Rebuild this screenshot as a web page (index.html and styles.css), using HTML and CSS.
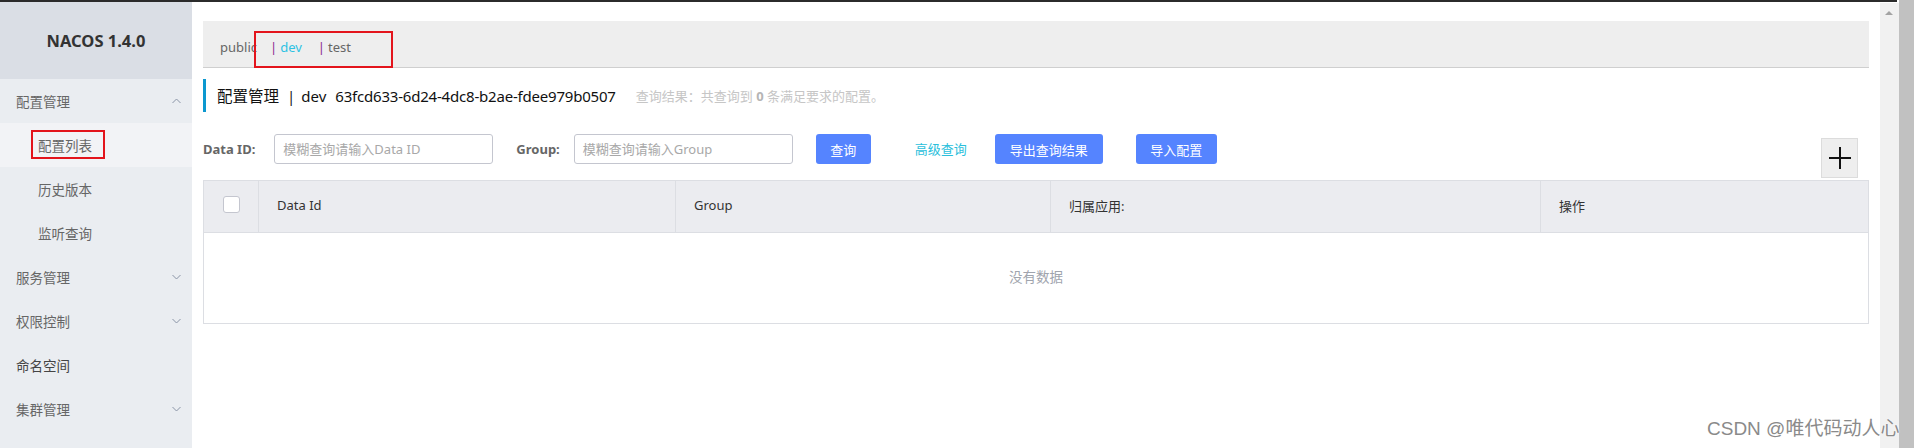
FILE: index.html
```html
<!DOCTYPE html>
<html lang="zh-CN">
<head>
<meta charset="utf-8">
<title>Nacos</title>
<link rel="stylesheet" href="styles.css">
</head>
<body>
<div class="screen">
  <div class="frame">
    <div class="topbar"></div>
    <div class="layout">
      <aside class="sidebar">
        <div class="brand">NACOS 1.4.0</div>
        <ul class="menu">
          <li class="menu-item"><span>配置管理</span><svg class="chev" width="9" height="6" viewBox="0 0 9 6"><path d="M0.5 5 L4.5 1 L8.5 5" fill="none" stroke="#8a94a6" stroke-width="1"/></svg></li>
          <li class="sub-item active"><span>配置列表</span><span class="annot annot-menu"></span></li>
          <li class="sub-item"><span>历史版本</span></li>
          <li class="sub-item"><span>监听查询</span></li>
          <li class="menu-item"><span>服务管理</span><svg class="chev" width="9" height="6" viewBox="0 0 9 6"><path d="M0.5 1 L4.5 5 L8.5 1" fill="none" stroke="#8a94a6" stroke-width="1"/></svg></li>
          <li class="menu-item"><span>权限控制</span><svg class="chev" width="9" height="6" viewBox="0 0 9 6"><path d="M0.5 1 L4.5 5 L8.5 1" fill="none" stroke="#8a94a6" stroke-width="1"/></svg></li>
          <li class="menu-item dark"><span>命名空间</span></li>
          <li class="menu-item"><span>集群管理</span><svg class="chev" width="9" height="6" viewBox="0 0 9 6"><path d="M0.5 1 L4.5 5 L8.5 1" fill="none" stroke="#8a94a6" stroke-width="1"/></svg></li>
        </ul>
      </aside>
      <main class="main">
        <div class="ns-bar">
          <span class="ns ns-public">public</span>
          <span class="ns-sep">|</span><span class="ns ns-active">dev</span>
          <span class="ns-sep ns-sep2">|</span><span class="ns">test</span>
          <span class="annot annot-ns"></span>
        </div>
        <div class="title-row">
          <span class="title-cn">配置管理</span>
          <span class="title-sep">|</span>
          <span class="title-ns">dev</span>
          <span class="title-id">63fcd633-6d24-4dc8-b2ae-fdee979b0507</span>
          <span class="result">查询结果：共查询到 <b>0</b> 条满足要求的配置。</span>
        </div>
        <div class="search-row">
          <label class="label label-id">Data ID:</label>
          <div class="input input-id">模糊查询请输入Data ID</div>
          <label class="label label-group">Group:</label>
          <div class="input input-group">模糊查询请输入Group</div>
          <button class="btn btn-query">查询</button>
          <span class="link">高级查询</span>
          <button class="btn btn-export">导出查询结果</button>
          <button class="btn btn-import">导入配置</button>
          <div class="add-btn"><svg width="24" height="24" viewBox="0 0 24 24"><path d="M12 1 V23 M1 12 H23" stroke="#111" stroke-width="2"/></svg></div>
        </div>
        <div class="table">
          <div class="thead">
            <div class="cell cell-check"><span class="checkbox"></span></div>
            <div class="cell">Data Id</div>
            <div class="cell">Group</div>
            <div class="cell">归属应用:</div>
            <div class="cell cell-last">操作</div>
          </div>
          <div class="tbody">没有数据</div>
        </div>
      </main>
      <div class="vscroll"><span class="arrow"></span></div>
    </div>
  </div>
  <div class="outer-scroll"></div>
  <div class="watermark">CSDN @唯代码动人心</div>
</div>
</body>
</html>
```

FILE: styles.css
```css
* { box-sizing: border-box; }
html, body { margin: 0; padding: 0; }
body {
  font-family: "Noto Sans", "Noto Sans CJK SC", sans-serif;
  font-size: 13px;
  color: #333;
  background: #fff;
}
.screen {
  position: relative;
  width: 1914px;
  height: 448px;
  display: flex;
  overflow: hidden;
}
.frame {
  width: 1899px;
  height: 448px;
  display: flex;
  flex-direction: column;
}
.topbar {
  height: 2px;
  width: 1897px;
  background: #2b2b2b;
  flex: none;
}
.layout {
  flex: 1;
  display: flex;
  min-height: 0;
}
.sidebar {
  width: 192px;
  flex: none;
  background: #eaedf1;
}
.brand {
  height: 77px;
  background: #dadee5;
  display: flex;
  align-items: center;
  justify-content: center;
  font-weight: bold;
  font-size: 16.5px;
  color: #333;
  padding-bottom: 1px;
}
.menu { list-style: none; margin: 0; padding: 0; }
.menu-item, .sub-item {
  position: relative;
  height: 44px;
  display: flex;
  align-items: center;
  font-size: 13.5px;
  color: #666;
}
.menu-item { padding: 0 11px 0 16px; justify-content: space-between; }
.menu-item.dark { color: #444; }
.sub-item { padding-left: 38px; }
.sub-item.active { background: #f2f3f6; }
.chev { display: block; }
.annot {
  position: absolute;
  border: 2px solid #e3141c;
  pointer-events: none;
}
.annot-menu { left: 31px; top: 7px; width: 74px; height: 29px; }

.main {
  flex: 1;
  min-width: 0;
  padding: 19px 11px 0 11px;
}
.ns-bar {
  position: relative;
  height: 47px;
  background: #eeeeee;
  border-bottom: 1px solid #cfcfcf;
  display: flex;
  align-items: center;
  padding-left: 17px;
  padding-top: 5px;
  font-size: 13px;
  color: #666;
}
.ns-public { margin-right: 13px; }
.ns-sep { color: #8b2a8e; margin-right: 3px; }
.ns-sep2 { margin-left: 16px; }
.ns-active { color: #2ec2e3; }
.annot-ns { left: 51px; top: 10px; width: 139px; height: 37px; }

.title-row {
  margin-top: 11px;
  height: 33px;
  border-left: 3px solid #0c98cf;
  padding-left: 11px;
  display: flex;
  align-items: center;
  font-size: 15px;
  color: #111;
  white-space: nowrap;
}
.title-cn { font-size: 15.5px; }
.title-sep { margin: 0 6px 0 8px; color: #222; }
.title-ns { margin-right: 9px; }
.title-id { letter-spacing: -0.2px; }
.result {
  margin-left: 20px;
  font-size: 13px;
  color: #c6c6c6;
}
.result b { color: #b5b5b5; }

.search-row {
  margin-top: 22px;
  height: 44px;
  display: flex;
  align-items: flex-start;
}
.label {
  height: 30px;
  line-height: 30px;
  font-weight: bold;
  font-size: 13px;
  color: #666;
  margin-right: 14px;
}
.label-id { margin-right: 19px; }
.label-group { margin-left: 23px; }
.input {
  height: 30px;
  border: 1px solid #c4c6cf;
  border-radius: 3px;
  padding-left: 8px;
  line-height: 28px;
  font-size: 13px;
  color: #a8a8a8;
}
.input-id { width: 219px; }
.input-group { width: 219px; }
.btn {
  height: 30px;
  border: none;
  border-radius: 3px;
  background: #5584ff;
  color: #fff;
  font-family: inherit;
  font-size: 13px;
  padding: 0;
  cursor: pointer;
}
.btn-query { margin-left: 23px; width: 55px; }
.link {
  height: 30px;
  line-height: 30px;
  margin-left: 44px;
  color: #2bbfdc;
  font-size: 13px;
}
.btn-export { margin-left: 28px; width: 108px; }
.btn-import { margin-left: 33px; width: 81px; }
.add-btn {
  margin-left: auto;
  margin-right: 11px;
  margin-top: 4px;
  width: 37px;
  height: 40px;
  background: #eeeeee;
  border: 1px solid #dcdcdc;
  display: flex;
  align-items: center;
  justify-content: center;
}
.add-btn svg { display: block; }

.table {
  margin-top: 2px;
  border: 1px solid #dcdee3;
}
.thead {
  display: grid;
  grid-template-columns: 55px 417px 375px 490px 1fr;
  height: 52px;
  background: #ebecf0;
  border-bottom: 1px solid #dcdee3;
}
.cell {
  display: flex;
  align-items: center;
  padding-left: 18px;
  padding-bottom: 3px;
  border-right: 1px solid #dcdee3;
  font-size: 13px;
  color: #333;
}
.cell-last { border-right: none; }
.cell-check { padding-left: 0; justify-content: center; }
.checkbox {
  width: 17px;
  height: 17px;
  border: 1px solid #c4c6cf;
  border-radius: 3px;
  background: #fff;
  margin-top: -2px;
}
.tbody {
  height: 90px;
  display: flex;
  align-items: center;
  justify-content: center;
  padding-bottom: 5px;
  color: #a0a4ad;
  font-size: 13.5px;
}

.vscroll {
  width: 19px;
  flex: none;
  margin-top: 1px;
  background: #f1f1f1;
  position: relative;
}
.arrow {
  position: absolute;
  left: 5px;
  top: 8px;
  width: 0;
  height: 0;
  border-left: 4px solid transparent;
  border-right: 4px solid transparent;
  border-bottom: 4px solid #a3a3a3;
}
.outer-scroll {
  width: 15px;
  flex: none;
  background: #c1c1c1;
}
.watermark {
  position: absolute;
  left: 1707px;
  top: 413px;
  font-family: "Liberation Sans", "Noto Sans CJK SC", sans-serif;
  font-size: 19px;
  color: #8a8a8a;
  text-shadow: 0 0 1px #fff, 0 0 2px #fff;
  white-space: nowrap;
}
```
